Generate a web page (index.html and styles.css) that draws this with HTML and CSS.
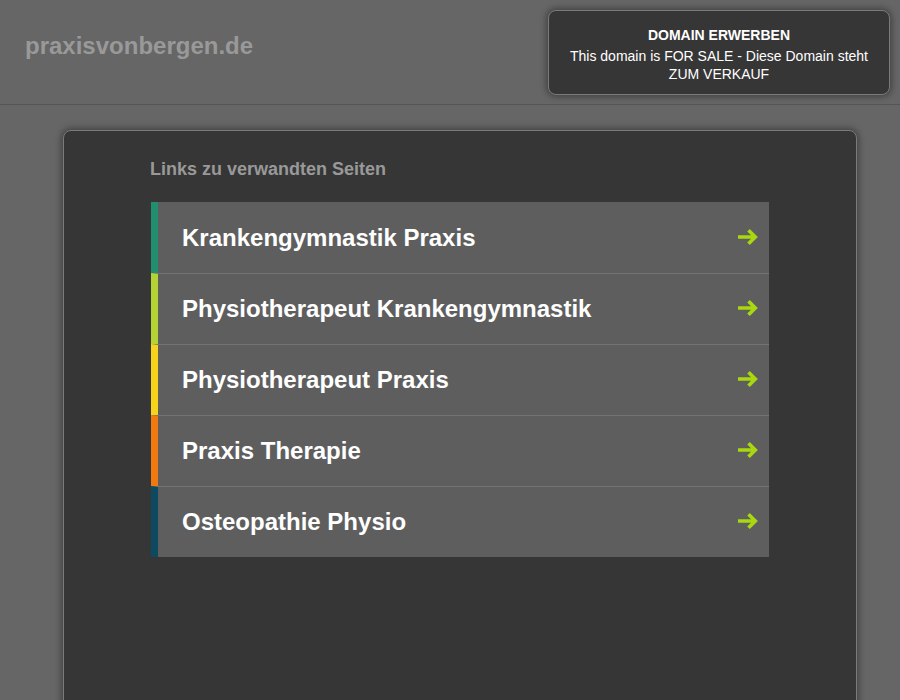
FILE: index.html
```html
<!DOCTYPE html>
<html lang="de">
<head>
<meta charset="utf-8">
<title>praxisvonbergen.de</title>
<link rel="stylesheet" href="styles.css">
</head>
<body>
<header class="header">
  <div class="domain">praxisvonbergen.de</div>
  <div class="sale">
    <div class="sale-title">DOMAIN ERWERBEN</div>
    <div class="sale-text">This domain is FOR SALE - Diese Domain steht ZUM VERKAUF</div>
  </div>
</header>
<main class="main">
  <div class="inner">
    <h2 class="heading">Links zu verwandten Seiten</h2>
    <ul class="links">
      <li class="link c1"><span class="label">Krankengymnastik Praxis</span><svg class="arrow" viewBox="0 0 20 18"><path d="M0 9H17M10.5 2.2L17.3 9L10.5 15.8"/></svg></li>
      <li class="link c2"><span class="label">Physiotherapeut Krankengymnastik</span><svg class="arrow" viewBox="0 0 20 18"><path d="M0 9H17M10.5 2.2L17.3 9L10.5 15.8"/></svg></li>
      <li class="link c3"><span class="label">Physiotherapeut Praxis</span><svg class="arrow" viewBox="0 0 20 18"><path d="M0 9H17M10.5 2.2L17.3 9L10.5 15.8"/></svg></li>
      <li class="link c4"><span class="label">Praxis Therapie</span><svg class="arrow" viewBox="0 0 20 18"><path d="M0 9H17M10.5 2.2L17.3 9L10.5 15.8"/></svg></li>
      <li class="link c5"><span class="label">Osteopathie Physio</span><svg class="arrow" viewBox="0 0 20 18"><path d="M0 9H17M10.5 2.2L17.3 9L10.5 15.8"/></svg></li>
    </ul>
  </div>
</main>
</body>
</html>
```
FILE: styles.css
```css
html, body {
  margin: 0;
  padding: 0;
  height: 100%;
  overflow: hidden;
}
body {
  background: #666666;
  font-family: "Liberation Sans", Arial, sans-serif;
}
.header {
  height: 105px;
  border-bottom: 1px solid #555555;
  display: flex;
  justify-content: space-between;
  align-items: flex-start;
  box-sizing: border-box;
}
.domain {
  margin: 32px 0 0 25px;
  font-size: 24px;
  font-weight: bold;
  color: #999999;
}
.sale {
  margin: 10px 10px 0 0;
  width: 342px;
  height: 85px;
  box-sizing: border-box;
  background: #363636;
  border: 1px solid #7a7a7a;
  border-radius: 8px;
  box-shadow: 0 0 6px 2px rgba(0,0,0,0.35);
  color: #ffffff;
  text-align: center;
  padding: 15px 14px 0;
}
.sale-title {
  font-size: 14px;
  font-weight: bold;
  line-height: 18px;
  margin-bottom: 3px;
}
.sale-text {
  font-size: 14px;
  line-height: 18px;
}
.main {
  margin: 25px 0 0 63px;
  width: 794px;
  height: 600px;
  box-sizing: border-box;
  background: #363636;
  border: 1px solid #7a7a7a;
  border-radius: 8px;
  box-shadow: 0 0 6px 2px rgba(0,0,0,0.35);
}
.inner {
  padding: 27px 0 0 86px;
}
.heading {
  margin: 0 0 22px;
  font-size: 18px;
  font-weight: bold;
  color: #999999;
  line-height: 22px;
}
.links {
  list-style: none;
  margin: 0 0 0 1px;
  padding: 0;
  width: 618px;
}
.link {
  height: 71px;
  box-sizing: border-box;
  background: #5e5e5e;
  border-left: 7px solid #1f8f6f;
  border-top: 1px solid #747474;
  display: flex;
  align-items: center;
  justify-content: space-between;
  padding: 0 11px 0 24px;
}
.link:first-child {
  border-top: none;
}
.c1 { border-left-color: #1f8f6f; }
.c2 { border-left-color: #b5d334; }
.c3 { border-left-color: #f7d31a; }
.c4 { border-left-color: #f07a10; }
.c5 { border-left-color: #0d4a60; }
.label {
  color: #ffffff;
  font-size: 24px;
  font-weight: bold;
}
.arrow {
  width: 20px;
  height: 18px;
  margin-top: -2px;
  fill: none;
  stroke: #a9d811;
  stroke-width: 3.6;
  stroke-linejoin: miter;
}
```
